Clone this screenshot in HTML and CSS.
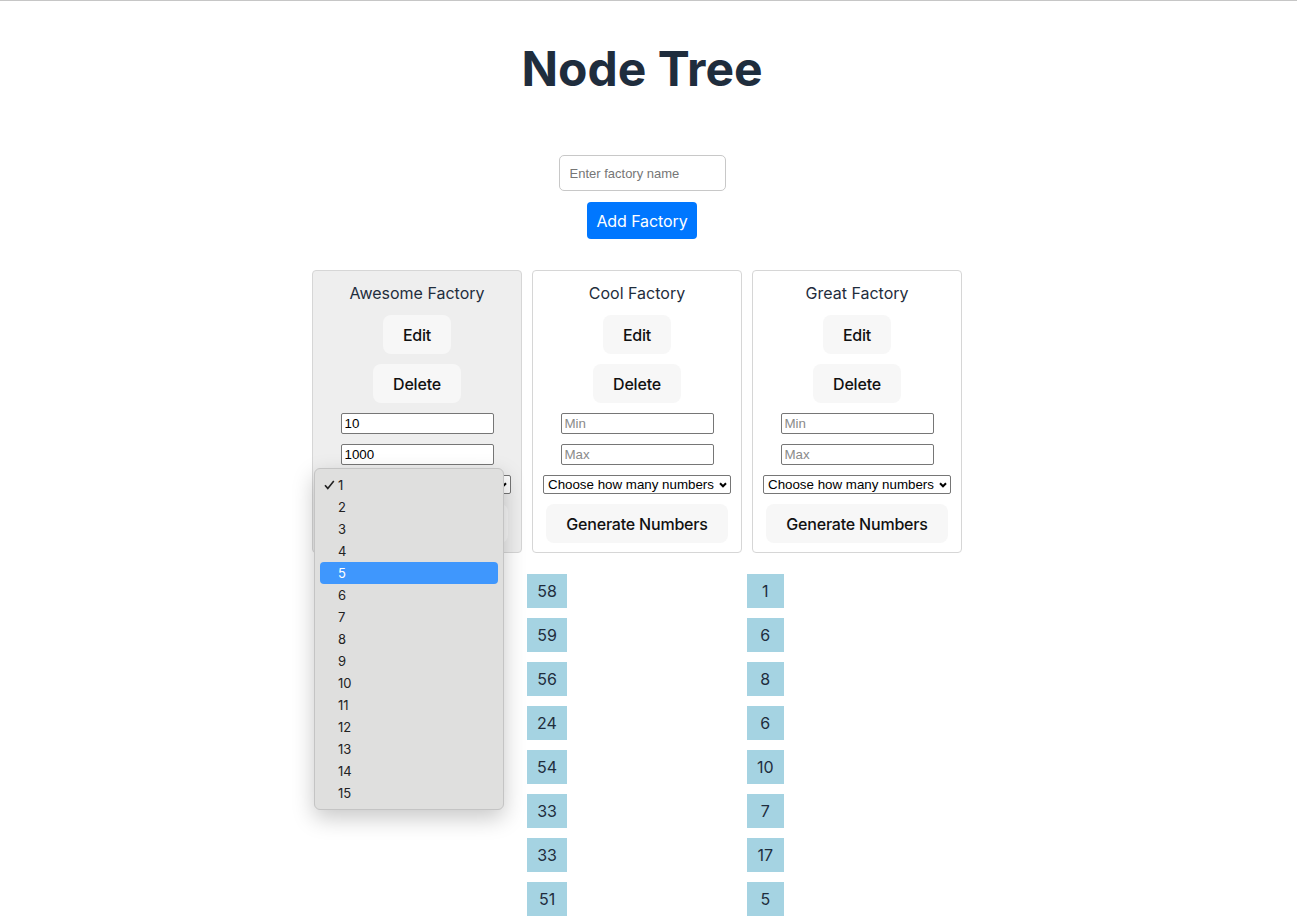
FILE: index.html
```html
<!DOCTYPE html>
<html lang="en">
<head>
<meta charset="utf-8">
<title>Node Tree</title>
<link rel="stylesheet" href="styles.css">
</head>
<body>
<div class="topline"></div>
<main class="app">
  <h1 class="title">Node Tree</h1>
  <div class="add-form">
    <input class="name-input" type="text" placeholder="Enter factory name">
    <button class="add-btn">Add Factory</button>
  </div>
  <div class="factories">
    <div class="factory-col">
      <div class="card card-active">
        <div class="card-title">Awesome Factory</div>
        <button class="btn">Edit</button>
        <button class="btn">Delete</button>
        <input class="num-input" type="text" value="10" placeholder="Min">
        <input class="num-input" type="text" value="1000" placeholder="Max">
        <div class="select-wrap">
          <select class="count-select"><option>Choose how many numbers</option></select>
          <svg class="chev" width="8" height="6" viewBox="0 0 8 6"><path d="M1 1.2 L4 4.3 L7 1.2" fill="none" stroke="#000" stroke-width="2"/></svg>
        </div>
        <button class="btn">Generate Numbers</button>
      </div>
      <div class="popup">
        <div class="opt"><svg class="check" width="11" height="10" viewBox="0 0 11 10"><path d="M1 5.2 L3.8 8.4 L9.8 1" fill="none" stroke="#222" stroke-width="1.6"/></svg>1</div>
        <div class="opt">2</div>
        <div class="opt">3</div>
        <div class="opt">4</div>
        <div class="opt opt-hl">5</div>
        <div class="opt">6</div>
        <div class="opt">7</div>
        <div class="opt">8</div>
        <div class="opt">9</div>
        <div class="opt">10</div>
        <div class="opt">11</div>
        <div class="opt">12</div>
        <div class="opt">13</div>
        <div class="opt">14</div>
        <div class="opt">15</div>
      </div>
    </div>
    <div class="factory-col">
      <div class="card">
        <div class="card-title">Cool Factory</div>
        <button class="btn">Edit</button>
        <button class="btn">Delete</button>
        <input class="num-input" type="text" placeholder="Min">
        <input class="num-input" type="text" placeholder="Max">
        <div class="select-wrap">
          <select class="count-select"><option>Choose how many numbers</option></select>
          <svg class="chev" width="8" height="6" viewBox="0 0 8 6"><path d="M1 1.2 L4 4.3 L7 1.2" fill="none" stroke="#000" stroke-width="2"/></svg>
        </div>
        <button class="btn">Generate Numbers</button>
      </div>
      <div class="numbers">
        <div class="num">58</div>
        <div class="num">59</div>
        <div class="num">56</div>
        <div class="num">24</div>
        <div class="num">54</div>
        <div class="num">33</div>
        <div class="num">33</div>
        <div class="num">51</div>
      </div>
    </div>
    <div class="factory-col">
      <div class="card">
        <div class="card-title">Great Factory</div>
        <button class="btn">Edit</button>
        <button class="btn">Delete</button>
        <input class="num-input" type="text" placeholder="Min">
        <input class="num-input" type="text" placeholder="Max">
        <div class="select-wrap">
          <select class="count-select"><option>Choose how many numbers</option></select>
          <svg class="chev" width="8" height="6" viewBox="0 0 8 6"><path d="M1 1.2 L4 4.3 L7 1.2" fill="none" stroke="#000" stroke-width="2"/></svg>
        </div>
        <button class="btn">Generate Numbers</button>
      </div>
      <div class="numbers">
        <div class="num">1</div>
        <div class="num">6</div>
        <div class="num">8</div>
        <div class="num">6</div>
        <div class="num">10</div>
        <div class="num">7</div>
        <div class="num">17</div>
        <div class="num">5</div>
      </div>
    </div>
  </div>
</main>
</body>
</html>
```
FILE: styles.css
```css
html, body {
  margin: 0;
  padding: 0;
  background: #fff;
  overflow: hidden;
}
body {
  font-family: Inter, "Noto Sans", sans-serif;
  color: #1f2d3d;
}
.topline {
  height: 0;
  border-top: 1px solid #c6c6c6;
}
.app {
  width: 1284px;
  display: flex;
  flex-direction: column;
  align-items: center;
}
.title {
  margin: 39px 0 0;
  font-size: 48px;
  line-height: 58px;
  font-weight: 700;
  color: #1f2d3d;
}
.add-form {
  margin-top: 57px;
  display: flex;
  flex-direction: column;
  align-items: center;
  gap: 11px;
}
.name-input {
  display: block;
  box-sizing: border-box;
  width: 167px;
  height: 36px;
  margin: 0;
  border: 1px solid #c8c8c8;
  border-radius: 5px;
  padding: 0 10px;
  font-family: "Liberation Sans", Arial, sans-serif;
  font-size: 13px;
  color: #222;
  outline: none;
}
.name-input::placeholder {
  color: #767676;
}
.add-btn {
  display: block;
  box-sizing: border-box;
  height: 37px;
  margin: 0;
  padding: 0 9px;
  border: none;
  border-radius: 4px;
  background: #0077ff;
  color: #fff;
  font-family: Inter, "Noto Sans", sans-serif;
  font-size: 16px;
  letter-spacing: -0.1px;
}
.factories {
  margin-top: 31px;
  align-self: stretch;
  padding-right: 10px;
  display: flex;
  justify-content: center;
  align-items: flex-start;
}
.factory-col {
  position: relative;
  width: 220px;
  display: flex;
  flex-direction: column;
  align-items: flex-start;
}
.card {
  box-sizing: border-box;
  width: 210px;
  margin: 0 5px;
  border: 1px solid #d6d6d6;
  border-radius: 4px;
  padding: 11px 10px 9px;
  display: flex;
  flex-direction: column;
  align-items: center;
  gap: 10px;
  background: #fff;
}
.card-active {
  background: #eeeeee;
}
.card-title {
  font-size: 16px;
  line-height: 23px;
  color: #1f2d3d;
}
.btn {
  display: block;
  box-sizing: border-box;
  height: 39px;
  margin: 0;
  padding: 0 20px;
  border: none;
  border-radius: 8px;
  background: #f7f7f7;
  color: #111;
  font-family: Inter, "Noto Sans", sans-serif;
  font-size: 16px;
  font-weight: 500;
  letter-spacing: -0.2px;
}
.num-input {
  display: block;
  box-sizing: border-box;
  width: 153px;
  height: 21px;
  min-height: 0;
  margin: 0;
  border: 1px solid #767676;
  border-radius: 2px;
  padding: 0 3px;
  background: #fff;
  font-family: "Liberation Sans", Arial, sans-serif;
  font-size: 13.33px;
  line-height: 19px;
  color: #000;
  outline: none;
}
.num-input::placeholder {
  color: #8a8a8a;
}
.select-wrap {
  position: relative;
  width: 188px;
  height: 19px;
}
.count-select {
  display: block;
  box-sizing: border-box;
  width: 188px;
  height: 19px;
  margin: 0;
  appearance: none;
  -webkit-appearance: none;
  border: 1px solid #767676;
  border-radius: 2px;
  background: #fff;
  padding: 0 0 0 4px;
  font-family: "Liberation Sans", Arial, sans-serif;
  font-size: 13.33px;
  line-height: 17px;
  color: #000;
}
.chev {
  position: absolute;
  right: 4px;
  top: 7px;
}
.numbers {
  margin-top: 21px;
  display: inline-flex;
  flex-direction: column;
  gap: 10px;
}
.num {
  height: 34px;
  box-sizing: border-box;
  padding: 0 10px;
  background: #a5d3e2;
  color: #1f2d3d;
  font-size: 16px;
  line-height: 34px;
  text-align: center;
}
.popup {
  position: absolute;
  left: 7px;
  top: 198px;
  box-sizing: border-box;
  width: 190px;
  height: 342px;
  padding: 5px 5px 0;
  background: #dfdfde;
  border: 1px solid #c4c4c4;
  border-radius: 6px;
  box-shadow: 0 8px 22px rgba(0, 0, 0, 0.22);
  z-index: 5;
}
.opt {
  position: relative;
  height: 22px;
  line-height: 22px;
  padding-left: 18px;
  border-radius: 4px;
  font-size: 13px;
  color: #222;
}
.opt-hl {
  background: #3f97fd;
  color: #fff;
}
.check {
  position: absolute;
  left: 4px;
  top: 6px;
}
```
